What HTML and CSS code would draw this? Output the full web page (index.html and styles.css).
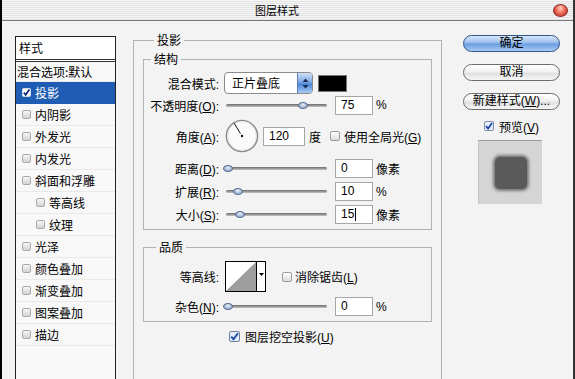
FILE: index.html
```html
<!DOCTYPE html>
<html lang="zh-CN">
<head>
<meta charset="utf-8">
<title>图层样式</title>
<link rel="stylesheet" href="styles.css">
</head>
<body>
<div class="window">
  <div class="titlebar">
    <span class="title">图层样式</span>
    <span class="close"></span>
  </div>
  <div class="body">
    <div class="styles">
      <div class="styles-head">样式</div>
      <div class="item blend">混合选项:默认</div>
      <div class="item selected"><svg class="cbsvg" width="9" height="9" viewBox="0 0 9 9"><rect x=".5" y=".5" width="8" height="8" rx="1" fill="#fff" stroke="#d0d8e8"/><path d="M1.8 4.6 L3.7 6.8 L7.4 1.6" fill="none" stroke="#0d2f78" stroke-width="1.7"/></svg>投影</div>
      <div class="item"><span class="cb"></span>内阴影</div>
      <div class="item"><span class="cb"></span>外发光</div>
      <div class="item"><span class="cb"></span>内发光</div>
      <div class="item"><span class="cb"></span>斜面和浮雕</div>
      <div class="item sub"><span class="cb"></span>等高线</div>
      <div class="item sub"><span class="cb"></span>纹理</div>
      <div class="item"><span class="cb"></span>光泽</div>
      <div class="item"><span class="cb"></span>颜色叠加</div>
      <div class="item"><span class="cb"></span>渐变叠加</div>
      <div class="item"><span class="cb"></span>图案叠加</div>
      <div class="item"><span class="cb"></span>描边</div>
    </div>

    <div class="main">
      <div class="group outer">
        <div class="legend">投影</div>

        <div class="group inner struct">
          <div class="legend l-struct">结构</div>

          <div class="row r-mode">
            <span class="lbl">混合模式:</span>
            <div class="select"><span class="sel-text">正片叠底</span><span class="arrows"><svg width="7" height="11" viewBox="0 0 7 11"><path d="M3.5 0.5 L6.5 4 L0.5 4 Z M3.5 10.5 L6.5 7 L0.5 7 Z" fill="#1b2f55"/></svg></span></div>
            <span class="swatch"></span>
          </div>

          <div class="row r-op">
            <span class="lbl">不透明度(<u>O</u>):</span>
            <div class="slider"><span class="thumb" style="left:72px"></span></div>
            <span class="num">75</span>
            <span class="unit">%</span>
          </div>

          <div class="row r-angle">
            <span class="lbl">角度(<u>A</u>):</span>
            <svg class="dial" width="34" height="34" viewBox="0 0 34 34">
              <circle cx="17" cy="17" r="15.6" fill="#fafafa" stroke="#8a8a8a" stroke-width="1.4"/>
              <circle cx="17" cy="17" r="14.4" fill="none" stroke="#dcdcdc" stroke-width="0.8"/>
              <line x1="9.2" y1="4.2" x2="15.4" y2="14.6" stroke="#111" stroke-width="1"/>
              <circle cx="17" cy="17" r="1.2" fill="#111"/>
            </svg>
            <span class="num wide">120</span>
            <span class="unit deg">度</span>
            <span class="box"></span>
            <span class="cbtext">使用全局光(<u>G</u>)</span>
          </div>

          <div class="row r-s">
            <span class="lbl">距离(<u>D</u>):</span>
            <div class="slider"><span class="thumb" style="left:-3px"></span></div>
            <span class="num">0</span>
            <span class="unit">像素</span>
          </div>

          <div class="row r-s">
            <span class="lbl">扩展(<u>R</u>):</span>
            <div class="slider"><span class="thumb" style="left:7px"></span></div>
            <span class="num">10</span>
            <span class="unit">%</span>
          </div>

          <div class="row r-s">
            <span class="lbl">大小(<u>S</u>):</span>
            <div class="slider"><span class="thumb" style="left:9px"></span></div>
            <span class="num">15<span class="caret"></span></span>
            <span class="unit">像素</span>
          </div>
        </div>

        <div class="group inner quality">
          <div class="legend l-quality">品质</div>

          <div class="row r-contour">
            <span class="lbl">等高线:</span>
            <div class="contour">
              <svg class="curve" width="30" height="29" viewBox="0 0 30 29"><polygon points="0,29 30,0 30,29" fill="#9d9d9d"/></svg>
              <span class="dd"><svg width="5" height="3" viewBox="0 0 5 3"><path d="M0 0 L5 0 L2.5 3 Z" fill="#000"/></svg></span>
            </div>
            <span class="box b-anti"></span>
            <span class="cbtext">消除锯齿(<u>L</u>)</span>
          </div>

          <div class="row r-noise">
            <span class="lbl">杂色(<u>N</u>):</span>
            <div class="slider"><span class="thumb" style="left:-3px"></span></div>
            <span class="num">0</span>
            <span class="unit">%</span>
          </div>
        </div>

        <div class="knock">
          <svg class="ck" width="11" height="11" viewBox="0 0 11 11"><rect x=".5" y=".5" width="10" height="10" rx="1.5" fill="#e6eefb" stroke="#6f7f9c"/><path d="M2.2 5.6 L4.5 8.3 L8.9 2.2" fill="none" stroke="#1d49a8" stroke-width="1.9"/></svg>
          <span class="cbtext">图层挖空投影(<u>U</u>)</span>
        </div>
      </div>
    </div>

    <div class="side">
      <div class="btn default">确定</div>
      <div class="btn">取消</div>
      <div class="btn">新建样式(<u>W</u>)...</div>
      <div class="preview-row">
        <svg class="ck" width="10" height="10" viewBox="0 0 11 11"><rect x=".5" y=".5" width="10" height="10" rx="1.5" fill="#e6eefb" stroke="#6f7f9c"/><path d="M2.2 5.6 L4.5 8.3 L8.9 2.2" fill="none" stroke="#1d49a8" stroke-width="1.9"/></svg>
        <span class="cbtext">预览(<u>V</u>)</span>
      </div>
      <div class="preview"><div class="shadow"></div></div>
    </div>
  </div>
</div>
</body>
</html>
```

FILE: styles.css
```css
* { box-sizing: border-box; }
html, body { margin: 0; padding: 0; }
body {
  font-family: "Liberation Sans", "Noto Sans CJK SC", sans-serif;
  font-size: 12px;
  color: #000;
  background: #fff;
}
u { text-decoration: underline; text-underline-offset: 1px; }

.window {
  width: 575px;
  height: 379px;
  overflow: hidden;
  background: #f3f3f3;
  border-left: 2px solid #000;
  border-right: 2px solid #333;
}

/* title bar */
.titlebar {
  height: 21px;
  border-bottom: 1px solid #7a7a7a;
  background: repeating-linear-gradient(to bottom, #f7f7f7 0 1px, #e2e2e2 1px 2px);
  display: flex;
  align-items: center;
}
.title {
  margin-left: 253px;
  font-family: "Noto Sans CJK SC", sans-serif;
  font-size: 11px;
  line-height: 12px;
}
.close {
  margin-left: auto;
  margin-right: 5px;
  width: 15px;
  height: 13px;
  border-radius: 50%;
  border: 1px solid #8e2a22;
  background: radial-gradient(ellipse at 50% 30%, #ffd2c6 0, #f27a68 40%, #c8352a 80%, #a8251d 100%);
}

.body {
  display: flex;
  align-items: flex-start;
}

/* left styles list */
.styles {
  margin-left: 13px;
  margin-top: 15px;
  width: 101px;
  height: 400px;
  flex-shrink: 0;
  border: 1px solid #222;
  background: #f8f8f8;
  font-family: "Noto Sans CJK SC", sans-serif;
}
.styles-head {
  height: 25px;
  padding-left: 3px;
  line-height: 22px;
  background: #fff;
  border-bottom: 3px double #333;
}
.item {
  height: 22px;
  display: flex;
  align-items: center;
  padding-left: 6px;
  border-bottom: 1px solid #e9e9e9;
  white-space: nowrap;
}
.item.blend { height: 20px; padding-left: 1px; }
.item.sub { padding-left: 20px; }
.item.selected { background: #1f5db4; color: #fff; border-bottom-color: #1f5db4; }
.cb {
  width: 9px;
  height: 9px;
  margin-right: 4px;
  border: 1px solid #a9a9a9;
  border-radius: 2px;
  background: linear-gradient(#f6f6f6, #d3d3d3);
  flex-shrink: 0;
}
.cbsvg { margin-right: 4px; flex-shrink: 0; }

/* main */
.main {
  margin-left: 17px;
  margin-top: 19px;
  width: 309px;
  flex-shrink: 0;
}
.group { border: 1px solid #b2b2b2; }
.outer { height: 400px; padding: 0 9px; }
.legend {
  width: fit-content;
  margin: -8px 0 0 11px;
  padding: 0 3px;
  background: #f3f3f3;
  line-height: 14px;
  font-family: "Noto Sans CJK SC", sans-serif;
}
.l-struct { margin-left: 7px; }
.l-quality { margin-left: 12px; }

.struct { margin-top: 12px; padding-bottom: 3px; }
.quality { margin-top: 17px; padding-bottom: 4px; }

.row { display: flex; align-items: center; white-space: nowrap; }
.lbl {
  width: 75px;
  margin-right: 5px;
  text-align: right;
  flex-shrink: 0;
}
.r-mode { margin-top: 5px; height: 24px; }
.r-op { height: 20px; }
.r-angle { height: 42px; }
.r-s { height: 23px; }
.r-contour { margin-top: 5px; height: 35px; }
.r-noise { margin-top: 2px; height: 21px; }

.select {
  width: 89px;
  height: 22px;
  display: flex;
  border: 1px solid #8c8c8c;
  border-radius: 4px;
  background: #fff;
  overflow: hidden;
}
.sel-text {
  flex: 1;
  padding-left: 7px;
  line-height: 20px;
  font-family: "Noto Sans CJK SC", sans-serif;
}
.arrows {
  width: 15px;
  display: flex;
  align-items: center;
  justify-content: center;
  border-left: 1px solid #5a7fb6;
  background: linear-gradient(#cfe0f7, #7faae4 45%, #4a86d8 55%, #a9cbf3);
}
.swatch {
  width: 29px;
  height: 17px;
  margin-left: 5px;
  background: #000;
  border: 1px solid #777;
}

.slider {
  position: relative;
  width: 101px;
  height: 3px;
  margin-left: 2px;
  border-radius: 2px;
  background: linear-gradient(#6a6a6a, #c4c4c4);
  flex-shrink: 0;
}
.thumb {
  position: absolute;
  top: -2px;
  width: 10px;
  height: 7px;
  border-radius: 50%;
  border: 1px solid #5b6e90;
  background: radial-gradient(ellipse at 50% 35%, #eef2fa 0, #a9bbd8 55%, #7088b2 100%);
}
.num {
  width: 38px;
  height: 19px;
  margin-left: 8px;
  padding-left: 5px;
  border: 1px solid #a6a6a6;
  background: #fff;
  line-height: 17px;
  font-family: "Liberation Sans", sans-serif;
  flex-shrink: 0;
  display: flex;
  align-items: center;
}
.num.wide { width: 42px; margin-left: 4px; }
.caret { display: inline-block; width: 1px; height: 13px; background: #000; margin-left: 1px; }
.unit { margin-left: 3px; font-family: "Liberation Sans", "Noto Sans CJK SC", sans-serif; }
.unit.deg { margin-left: 4px; }
.dial { margin-left: 1px; flex-shrink: 0; }

.box {
  width: 10px;
  height: 10px;
  margin-left: 9px;
  margin-right: 4px;
  border: 1px solid #9a9a9a;
  border-radius: 2px;
  background: linear-gradient(#fff, #dcdcdc);
  flex-shrink: 0;
}
.box.b-anti { margin-left: 16px; margin-right: 3px; }
.cbtext { font-family: "Liberation Sans", "Noto Sans CJK SC", sans-serif; }

.contour {
  width: 41px;
  height: 31px;
  margin-left: 1px;
  display: flex;
  border: 1px solid #000;
  background: #fff;
  flex-shrink: 0;
}
.curve { display: block; }
.dd {
  flex: 1;
  border-left: 1px solid #000;
  display: flex;
  justify-content: center;
  padding-top: 11px;
}
.dd svg { display: block; }

.knock {
  display: flex;
  align-items: center;
  height: 17px;
  margin-top: 6px;
  padding-left: 86px;
}
.knock .ck { margin-right: 5px; }

/* right column */
.side {
  margin-left: 21px;
  margin-top: 14px;
  width: 97px;
  display: flex;
  flex-direction: column;
  align-items: center;
  flex-shrink: 0;
}
.btn {
  width: 97px;
  height: 17px;
  margin-bottom: 12px;
  border: 1px solid #6c6c6c;
  border-radius: 9px;
  background: linear-gradient(#ffffff 0, #f1f1f1 45%, #e0e0e0 55%, #f7f7f7 100%);
  text-align: center;
  line-height: 15px;
  font-family: "Liberation Sans", "Noto Sans CJK SC", sans-serif;
  white-space: nowrap;
}
.btn.default {
  border-color: #35568c;
  background: linear-gradient(#d7e6f9 0, #a4c4ee 40%, #6b9fe0 55%, #a7cbf4 100%);
}
.preview-row {
  display: flex;
  align-items: center;
  height: 16px;
  margin-top: -4px;
}
.preview-row .ck { margin-right: 5px; }
.preview {
  width: 64px;
  height: 64px;
  margin-top: 6px;
  margin-right: 3px;
  background: #d5d5d5;
  border-top: 1px solid #9c9c9c;
  border-left: 1px solid #c4c4c4;
  display: flex;
  align-items: center;
  justify-content: center;
}
.shadow {
  width: 32px;
  height: 32px;
  border-radius: 5px;
  background: #5a5a5a;
  box-shadow: 0 0 3px 2px rgba(90, 90, 90, 0.75);
}
```
